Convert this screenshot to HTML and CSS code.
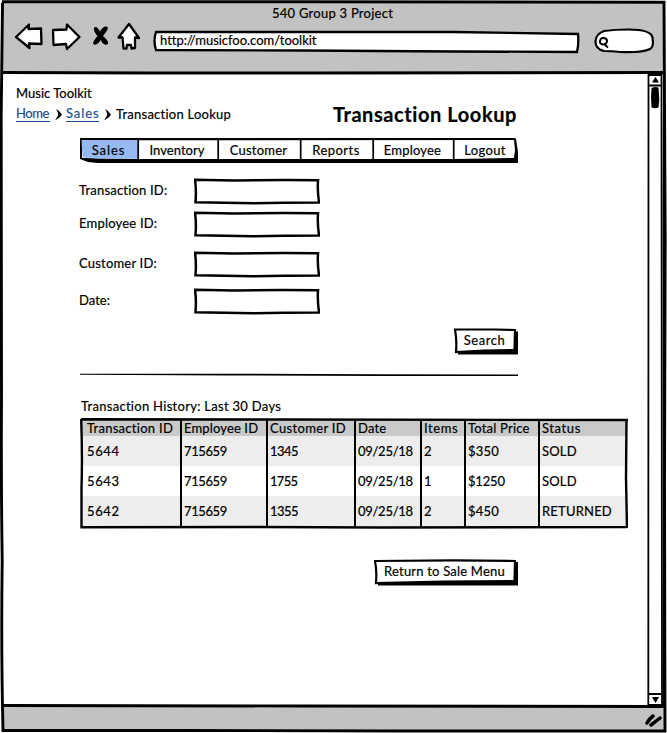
FILE: index.html
```html
<!DOCTYPE html>
<html lang="en">
<head>
<meta charset="utf-8">
<title>540 Group 3 Project</title>
<link rel="stylesheet" href="styles.css">
</head>
<body>
<div class="window">
  <header class="chrome">
    <div class="window-title">540 Group 3 Project</div>
    <div class="toolbar">
      <svg class="nav-icons" width="132" height="32" viewBox="12 21 132 32">
        <g fill="#fff" stroke="#000" stroke-width="2.300" stroke-linejoin="round">
          <path d="M17 37 30 24.500 29.500 29 42 28.500 42.500 44 30 43.500 30.500 48Z"/>
          <path d="M80.500 37 68 24.500 67.500 29.500 54 30 54.500 45 67 44 68 49Z"/>
          <path d="M130 24 119.500 37.500 123.500 37.500 124.500 48.500 127.500 48.500 128 45 132 45 132.500 48.500 136 48 136 37.500 140 38Z"/>
        </g>
        <path d="M95 27.500Q98 25.500 101 31.500Q105 25 108.500 27Q110.500 28 104 36Q110 41 109 44Q105 46.500 101.500 40Q98.500 45.500 95 44.500Q92 43.500 98.500 36Q94 31 95 27.500Z"/>
      </svg>
      <div class="address">
        <svg class="sketch" viewBox="0 0 427 24"><path fill="#fff" stroke="#000" stroke-width="2.300" d="M3 2 150 2 300 2 425 4Q426 13 424 22L300 21.500 150 20.500 3 20Q0 11 3 2Z"/></svg>
        <span>http://musicfoo.com/toolkit</span>
      </div>
      <svg class="search-pill" width="62" height="28" viewBox="593 27 62 28">
        <path fill="#fff" stroke="#000" stroke-width="2.200" d="M604 31Q615 29.500 628 29.500Q652 29.500 652.500 38Q654 47 650 49Q642 53 620 52Q610 51 604 51Q595 49 595.500 41Q596 34 604 31Z"/>
        <path fill="none" stroke="#000" stroke-width="2" d="M603 38Q607 38 607 41Q606.500 44.500 603 44.500Q599.500 44 600 41Q600.500 38 603 38M604 44 608 47.500"/>
      </svg>
    </div>
  </header>

  <div class="viewport">
    <main class="page">
      <div class="brand">Music Toolkit</div>
      <div class="heading-row">
        <nav class="crumbs">
          <a class="home" href="#">Home</a>
          <svg class="chevron" width="7" height="11" viewBox="0 0 7 11"><path d="M1 0Q5 2 7 5.500Q5 9 0 11Q3 7 3.200 5.500Q3 3 1 0Z"/></svg>
          <a class="sales" href="#">Sales</a>
          <svg class="chevron" width="7" height="11" viewBox="0 0 7 11"><path d="M1 0Q5 2 7 5.500Q5 9 0 11Q3 7 3.200 5.500Q3 3 1 0Z"/></svg>
          <span class="current">Transaction Lookup</span>
        </nav>
        <h1>Transaction Lookup</h1>
      </div>

      <div class="content">
        <nav class="menu">
          <svg class="sketch" viewBox="0 0 438 26">
            <path d="M-.5 0 130 0 435 0 436 1 438 14 438 25 375 25 120 25 18 25 8 24 0 21Z"/>
            <path fill="#fff" d="M2 2.300 434 2 435 12 434 20 376 21 57 21 2 20Z"/>
            <path fill="#96b9f2" d="M1.500 2.300 58 2.300 58 20.700 20 20.700 2.500 19.500Z"/>
            <path stroke="#000" stroke-width="1.700" d="M58.200 1V22M138.200 1V22M220.700 1V22M293.200 1V22M373.700 1V25"/>
          </svg>
          <a class="m-sales">Sales</a><a class="m-inventory">Inventory</a><a class="m-customer">Customer</a><a class="m-reports">Reports</a><a class="m-employee">Employee</a><a class="m-logout">Logout</a>
        </nav>

        <form class="lookup">
          <label>Transaction ID:</label>
          <svg class="field" viewBox="0 0 126 27"><path d="M1 1.800 40 2.500 90 2 124 2.300Q123.300 13 125 24.500L90 24.800 60 25.300 1.500 24.300Q2.500 12 1 1.800Z"/></svg>
          <label>Employee ID:</label>
          <svg class="field" viewBox="0 0 126 27"><path d="M1 1.800 40 2.500 90 2 124 2.300Q123.300 13 125 24.500L90 24.800 60 25.300 1.500 24.300Q2.500 12 1 1.800Z"/></svg>
          <label>Customer ID:</label>
          <svg class="field" viewBox="0 0 126 27"><path d="M1 1.800 40 2.500 90 2 124 2.300Q123.300 13 125 24.500L90 24.800 60 25.300 1.500 24.300Q2.500 12 1 1.800Z"/></svg>
          <label class="date-label">Date:</label>
          <svg class="field" viewBox="0 0 126 27"><path d="M1 1.800 40 2.500 90 2 124 2.300Q123.300 13 125 24.500L90 24.800 60 25.300 1.500 24.300Q2.500 12 1 1.800Z"/></svg>
        </form>

        <div class="button search">
          <svg class="sketch" viewBox="0 0 64 27"><path d="M4 4 64 3.500 64 26.500 4 26.500Z"/><path fill="#fff" stroke="#000" stroke-width="2.200" d="M1 1.500 40 1.500 61 2 60.500 22 30 22.500 2 24Q3 12 1 1.500Z"/></svg>
          <span>Search</span>
        </div>
        <svg class="rule" viewBox="0 0 438 4"><path d="M0 .8 150 .8 300 1.200 438 1.500V3L300 3 150 2.500 0 1.800Z"/></svg>

        <div class="history-title">Transaction History: Last 30 Days</div>
        <div class="history">
          <table>
            <colgroup><col class="c1"><col class="c2"><col class="c3"><col class="c4"><col class="c5"><col class="c6"><col class="c7"></colgroup>
            <thead><tr><th>Transaction ID</th><th class="t-employee">Employee ID</th><th class="t-customer">Customer ID</th><th>Date</th><th class="t-items">Items</th><th>Total Price</th><th class="t-status">Status</th></tr></thead>
            <tbody>
              <tr><td class="tid">5644</td><td class="eid">715659</td><td class="cid">1345</td><td class="date">09/25/18</td><td>2</td><td>$350</td><td>SOLD</td></tr>
              <tr><td class="tid">5643</td><td class="eid">715659</td><td class="cid cid-narrow">1755</td><td class="date">09/25/18</td><td>1</td><td class="price">$1250</td><td>SOLD</td></tr>
              <tr><td class="tid">5642</td><td class="eid">715659</td><td class="cid">1355</td><td class="date">09/25/18</td><td>2</td><td>$450</td><td>RETURNED</td></tr>
            </tbody>
          </table>
          <svg class="sketch over" viewBox="0 0 548 111"><path fill="none" stroke="#000" stroke-width="2.400" d="M1 1.300 200 1.500 548 2M1.200 1Q2.500 40 1.500 70L1.500 109.300 180 109 300 109.500 547 109M546.500 2 546 60 547 110"/><path stroke="#000" stroke-width="2" d="M101 1V110M187 1V110M275 1V110M341 1V110M385 1V110M459 1V110"/></svg>
        </div>

        <div class="button return">
          <svg class="sketch" viewBox="0 0 144 27"><path d="M4 4 144 3 144 26.500 4 26.500Z"/><path fill="#fff" stroke="#000" stroke-width="2.200" d="M1 2 80 1.300 141 2 140.500 22 70 22.500 2 24Q3 12 1 2Z"/></svg>
          <span>Return to Sale Menu</span>
        </div>
      </div>
    </main>
    <svg class="scrollbar" width="18" height="632" viewBox="646 74 18 632">
      <path fill="#fff" stroke="#000" stroke-width="1.800" d="M648.500 75 661.500 75 662 705 648.300 705Z"/>
      <path fill="none" stroke="#000" stroke-width="1.800" d="M648 85.500H662M648 694H662"/>
      <path d="M655.500 77 659 82.500H652ZM652 697H659L655.500 703Z"/>
      <path d="M651.500 88Q655 86.500 658.500 87.500L659.300 100 658.500 107.500Q655 109 651.500 107.500Q650.500 97 651.500 88Z"/>
    </svg>
  </div>

  <footer class="status">
    <svg width="18" height="16" viewBox="0 0 18 16"><path fill="none" stroke="#000" stroke-width="3.500" stroke-linecap="round" d="M3 11Q5 7 9 4M7 13Q11 10 16 6"/></svg>
  </footer>
  <svg class="sketch frame" viewBox="0 0 667 733">
    <g fill="none" stroke="#000" stroke-width="2.900">
      <path d="M2 1.800 300 1.800 664 2.200 665.200 240 664.500 480 665 731 400 731 180 730.500 3 730.500Q1 650 2.200 560Q1 480 1.500 400L1.200 115 2.500 3"/>
      <path d="M3 72.500 150 73 320 73 664 72.500M3 705.500 300 706 664 706.500"/>
      <path stroke-width="1.500" d="M664 25 663.500 200 663.800 500 663.500 705"/>
    </g>
  </svg>
</div>
</body>
</html>
```
FILE: styles.css
```css
* { box-sizing: border-box; }
body {
  margin: 0;
  background: #fff;
  color: #000;
  font: 13px/16px Lato, "Open Sans", sans-serif;
  letter-spacing: .2px;
  -webkit-text-stroke: .2px;
}
.window {
  position: relative;
  display: grid;
  grid-template-rows: 71px 632px 24px;
  width: 667px;
  height: 733px;
  padding: 3px 3px 3px 2px;
}
.sketch { position: absolute; left: 0; top: 0; width: 100%; height: 100%; z-index: -1; }
.frame, .over { z-index: 1; pointer-events: none; }

.chrome { background: #c2c2c2; }
.window-title { padding: 2px 1px 0 0; text-align: center; letter-spacing: .26px; }
.toolbar { display: flex; align-items: flex-start; padding-left: 10px; }
.nav-icons { margin-left: -1px; margin-right: 1px; }
.address {
  position: relative;
  z-index: 0;
  width: 427px;
  height: 24px;
  margin: 9px 0 0 9px;
  padding: 2px 7px;
  letter-spacing: -.03px;
}
.search-pill { margin: 6px 0 0 13px; }

.viewport { display: flex; justify-content: space-between; }
.page { width: 644px; padding: 11px 0 0 14px; }
.scrollbar { flex: none; }
.brand { letter-spacing: .02px; }
.heading-row { display: flex; justify-content: space-between; align-items: center; width: 501px; height: 26px; }
.crumbs { display: flex; align-items: center; }
.crumbs a { color: #1b4f8f; text-decoration: none; border-bottom: 1px solid #1b4f8f; line-height: 15px; height: 16px; }
.home { width: 34px; letter-spacing: -.45px; }
.sales { width: 33px; letter-spacing: .9px; }
.chevron { margin: 1px 4px 0 5px; }
.current { margin-left: 1px; letter-spacing: .24px; }
h1 { margin: 0; font-size: 20px; line-height: 24px; letter-spacing: .58px; }

.content { display: flex; flex-direction: column; padding: 11px 0 0 64px; }
.menu { position: relative; z-index: 0; display: flex; width: 438px; height: 26px; padding-top: 4px; }
.menu a { text-align: center; }
.m-sales { width: 57px; letter-spacing: .9px; }
.m-inventory { width: 80px; letter-spacing: .05px; }
.m-customer { width: 83px; }
.m-reports { width: 72px; letter-spacing: .46px; }
.m-employee { width: 81px; }
.m-logout { width: 64px; letter-spacing: .31px; }

.lookup {
  display: grid;
  grid-template-columns: 114px 126px;
  grid-template-rows: 33px 40px 37px 27px;
  align-items: start;
  padding-top: 14px;
}
.lookup label { padding-top: 4px; margin-left: -1px; }
.lookup .date-label { letter-spacing: .04px; }
.field { width: 126px; height: 27px; fill: #fff; stroke: #000; stroke-width: 2.5px; }

.button { position: relative; z-index: 0; height: 27px; text-align: center; }
.search { width: 64px; margin: 13px 0 0 374px; padding: 4px 3px 0 0; letter-spacing: .55px; }
.return { width: 144px; margin: 30px 0 0 294px; padding: 4px 3px 0 0; }
.rule { width: 438px; height: 4px; margin-top: 18px; }

.history-title { margin: 21px 0 0 1px; height: 20px; letter-spacing: .29px; }
.history { position: relative; width: 548px; height: 111px; padding: 2px 2px 3px 2px; }
table { width: 544px; border-collapse: collapse; table-layout: fixed; }
.c1 { width: 99px; } .c2 { width: 86px; } .c3 { width: 88px; } .c4 { width: 66px; }
.c5 { width: 44px; } .c6 { width: 74px; } .c7 { width: 87px; }
th, td { padding: 0 0 0 3px; text-align: left; font-weight: 400; white-space: nowrap; }
th:first-child, td:first-child { padding-left: 5px; }
thead tr { height: 16px; background: #c9c9c9; }
tbody tr { height: 30px; }
tbody tr:nth-child(odd) { background: #ededed; }
th:first-child { letter-spacing: .28px; }
.t-employee { letter-spacing: .14px; }
.t-customer { letter-spacing: .34px; }
.t-items, .t-status { letter-spacing: .6px; }
.tid { letter-spacing: .6px; }
.eid { letter-spacing: -.4px; }
.cid { letter-spacing: -.5px; }
.cid-narrow { letter-spacing: -.7px; }
.date { letter-spacing: -.28px; }
.price { letter-spacing: -.18px; }

.status { background: #c2c2c2; display: flex; justify-content: flex-end; padding: 6px 2px 0 0; }
```
